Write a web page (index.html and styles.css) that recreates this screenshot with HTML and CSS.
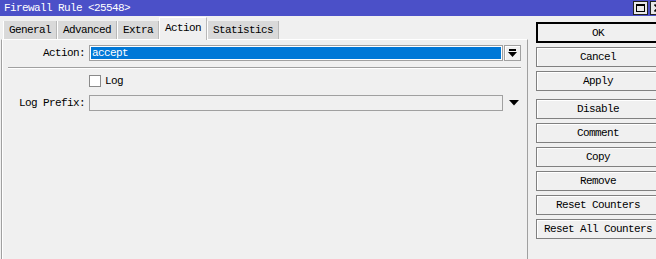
FILE: index.html
```html
<!DOCTYPE html>
<html lang="en">
<head>
  <meta charset="UTF-8" />
  <title>Firewall Rule &lt;25548&gt;</title>
  <link rel="stylesheet" href="styles.css">
</head>
<body>
  <div class="window">
    <div class="titlebar">
      <span class="title">Firewall Rule &lt;25548&gt;</span>
      <div class="wbtns">
        <span class="wbtn">
          <svg width="9" height="8" viewBox="0 0 9 8"><rect x="0.5" y="0.5" width="8" height="7" fill="none" stroke="#000"/><rect x="0" y="0" width="9" height="2" fill="#000"/></svg>
        </span>
        <span class="wbtn">
          <svg width="8" height="8" viewBox="0 0 8 8"><path d="M0.5 0.5 L7.5 7.5 M7.5 0.5 L0.5 7.5" stroke="#000" stroke-width="1.6"/></svg>
        </span>
      </div>
    </div>

    <div class="content">
      <div class="main">
        <div class="tabs">
          <span class="tab">General</span>
          <span class="tab">Advanced</span>
          <span class="tab">Extra</span>
          <span class="tab active">Action</span>
          <span class="tab">Statistics</span>
        </div>

        <div class="panel">
          <div class="row">
            <label class="lbl">Action:</label>
            <div class="field select"><span class="sel-text">accept</span></div>
            <span class="dropbtn">
              <svg width="9" height="8" viewBox="0 0 9 8"><rect x="1" y="0" width="7" height="2" fill="#000"/><path d="M0 3 L9 3 L4.5 8 Z" fill="#000"/></svg>
            </span>
          </div>

          <div class="sep"></div>

          <div class="row check-row">
            <span class="checkbox"></span>
            <span class="check-label">Log</span>
          </div>

          <div class="row">
            <label class="lbl">Log Prefix:</label>
            <div class="field"></div>
            <span class="arrow">
              <svg width="10" height="6" viewBox="0 0 10 6"><path d="M0 0 L10 0 L5 5.5 Z" fill="#000"/></svg>
            </span>
          </div>
        </div>
      </div>

      <div class="buttons">
        <button class="btn default">OK</button>
        <button class="btn">Cancel</button>
        <button class="btn">Apply</button>
        <button class="btn spaced">Disable</button>
        <button class="btn">Comment</button>
        <button class="btn">Copy</button>
        <button class="btn">Remove</button>
        <button class="btn">Reset Counters</button>
        <button class="btn">Reset All Counters</button>
      </div>
    </div>
  </div>
</body>
</html>
```

FILE: styles.css
```css
body {
  margin: 0;
  background: #f0f0f0;
  font-family: "Liberation Mono", "DejaVu Sans Mono", monospace;
  font-size: 11px;
  letter-spacing: -0.6px;
  color: #000;
  overflow: hidden;
}
.window {
  width: 656px;
  height: 259px;
  overflow: hidden;
  background: #f0f0f0;
}
.titlebar {
  height: 16px;
  background: #4b50c8;
  display: flex;
  align-items: center;
  justify-content: space-between;
}
.title {
  color: #fff;
  padding-left: 4px;
  line-height: 16px;
}
.wbtns {
  display: flex;
  gap: 2px;
  margin-right: -9px;
  align-self: flex-start;
  padding-top: 1px;
}
.wbtn {
  width: 13px;
  height: 12px;
  border: 1px solid #222;
  background: #e8e8e8;
  display: flex;
  align-items: center;
  justify-content: center;
}
.content {
  display: flex;
}
.main {
  width: 528px;
  flex: none;
}
.tabs {
  display: flex;
  align-items: flex-end;
  height: 23px;
  padding-left: 3px;
  position: relative;
  z-index: 1;
}
.tab {
  height: 18px;
  line-height: 18px;
  padding: 0 5px;
  background: #d9d9d9;
  border-left: 1px solid #fff;
  border-right: 1px solid #b8b8b8;
  box-sizing: border-box;
}
.tab.active {
  height: 23px;
  line-height: 20px;
  margin-bottom: -1px;
  background: #f0f0f0;
  border-top: 1px solid #fff;
}
.panel {
  height: 220px;
  margin-left: 1px;
  border-top: 1px solid #fff;
  border-left: 1px solid #a0a0a0;
  border-right: 1px solid #a0a0a0;
  box-shadow: inset 1px 0 #fff;
  padding-top: 5px;
}
.row {
  display: flex;
  align-items: center;
  height: 16px;
}
.lbl {
  width: 83px;
  text-align: right;
  padding-right: 4px;
  flex: none;
}
.field {
  width: 414px;
  height: 16px;
  box-sizing: border-box;
  border: 1px solid #a0a0a0;
  background: #f0f0f0;
  flex: none;
}
.field.select {
  background: #0078d7;
  box-shadow: inset 1px 1px #fff, inset -1px -1px #fff;
  color: #fff;
  display: flex;
  align-items: center;
}
.sel-text {
  padding-left: 2px;
  line-height: 12px;
}
.dropbtn {
  width: 17px;
  height: 16px;
  margin-left: 1px;
  box-sizing: border-box;
  border: 1px solid #a0a0a0;
  box-shadow: inset 1px 1px #fff;
  display: flex;
  align-items: center;
  justify-content: center;
}
.arrow {
  margin-left: 6px;
  display: flex;
  align-items: center;
}
.sep {
  margin: 6px 6px 6px 6px;
  width: 513px;
  height: 1px;
  background: #a0a0a0;
  border-bottom: 1px solid #fff;
}
.check-row {
  height: 12px;
  padding-left: 87px;
  margin-bottom: 8px;
}
.checkbox {
  width: 12px;
  height: 12px;
  box-sizing: border-box;
  border: 1px solid #8a8a8a;
  background: #fff;
  flex: none;
}
.check-label {
  margin-left: 4px;
}
.buttons {
  margin-left: 8px;
  padding-top: 6px;
  display: flex;
  flex-direction: column;
  gap: 4px;
}
.btn {
  width: 124px;
  height: 20px;
  padding: 0;
  font: inherit;
  letter-spacing: inherit;
  color: #000;
  background: #f0f0f0;
  border: 1px solid #808080;
  box-shadow: inset 1px 1px #fff;
  text-align: center;
}
.btn.default {
  height: 21px;
  border: 2px solid #000;
  box-shadow: none;
}
.btn.spaced {
  margin-top: 4px;
}
```
